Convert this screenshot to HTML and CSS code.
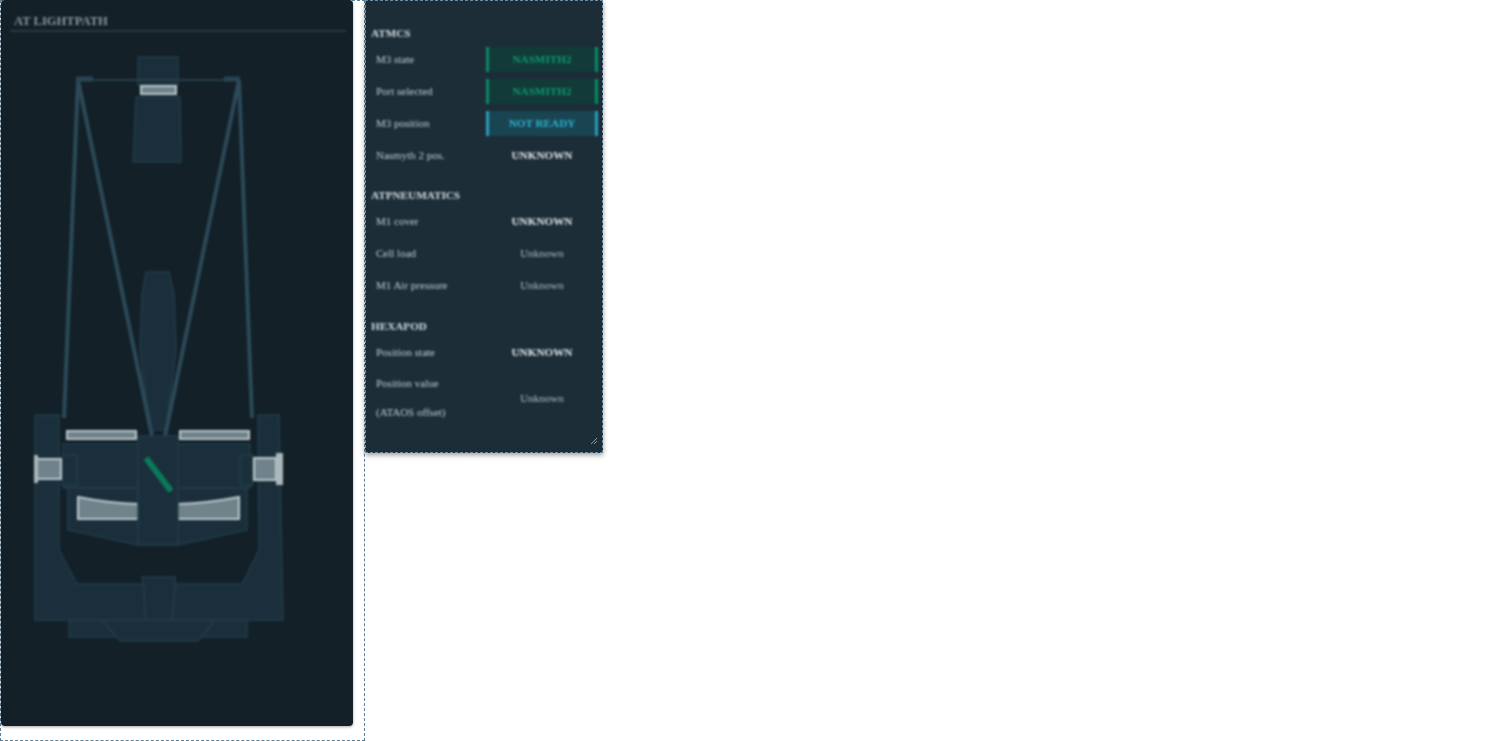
FILE: index.html
```html
<!DOCTYPE html>
<html lang="en">
<head>
    <meta charset="UTF-8">
    <title>AT Summary</title>
    <link rel="stylesheet" href="styles.css">
</head>
<body>
    <div class="cell">
        <section class="lightpath">
            <h2 class="lightpath-title">AT LIGHTPATH</h2>
            <svg class="telescope" width="352" height="726" viewBox="0 0 352 726">
                <!-- structure -->
                <g class="body">
                    <path d="M69 620H247V637H69Z"/>
                    <path d="M102 620L120 641H198L215 620Z"/>
                    <path d="M35 415H59V550L77 584H242L259 550L258 415H279L283 620H35Z"/>
                    <path d="M142 577H175V587L172 620H145L144 587Z"/>
                    <path d="M68 488V530L138 545H178L247 530V488Z"/>
                    <path d="M63 444H250V488H63Z"/>
                    <path d="M62 455H77V485H62Z"/>
                    <path d="M240 455H253V485H240Z"/>
                    <path d="M138 57H178V85H138Z"/>
                    <path d="M136 97H180L181 162H133Z"/>
                    <path d="M146 272H169L174 295L176 350L166 430H150L140 350L142 295Z"/>
                </g>
                <!-- truss -->
                <g class="truss">
                    <path d="M78 80L64 418"/>
                    <path d="M78 80L152 436"/>
                    <path d="M239 80L252 418"/>
                    <path d="M239 80L165 436"/>
                </g>
                <path class="truss-top" d="M78 80H239"/>
                <path class="truss-cap" d="M76 79H93M224 79H240"/>
                <!-- mirrors -->
                <g class="mirror">
                    <path d="M141 86H176V94H141Z"/>
                    <path d="M67 431H136V439H67Z"/>
                    <path d="M180 431H249V439H180Z"/>
                    <path d="M78 497Q108 503 138 504V519H78Z"/>
                    <path d="M178 504Q208 503 239 497V519H178Z"/>
                    <path d="M36 459H61V479H36Z"/>
                    <path d="M254 458H276V480H254Z"/>
                </g>
                <path class="flange" d="M34 455H38V483H34Z"/>
                <path class="flange" d="M276 453H283V485H276Z"/>
                <path class="body column" d="M138 436H178V545H138Z"/>
                <path class="m3" d="M146 458L171 491"/>
            </svg>
        </section>
    </div>

    <section class="summary">
        <div class="summary-body">
            <h3 class="group-title">ATMCS</h3>
            <div class="row"><span>M3 state</span><span class="status ok">NASMITH2</span></div>
            <div class="row"><span>Port selected</span><span class="status ok">NASMITH2</span></div>
            <div class="row"><span>M3 position</span><span class="status running">NOT READY</span></div>
            <div class="row"><span>Nasmyth 2 pos.</span><span class="status">UNKNOWN</span></div>

            <h3 class="group-title">ATPNEUMATICS</h3>
            <div class="row"><span>M1 cover</span><span class="status">UNKNOWN</span></div>
            <div class="row"><span>Cell load</span><span class="value">Unknown</span></div>
            <div class="row"><span>M1 Air pressure</span><span class="value">Unknown</span></div>

            <h3 class="group-title group-title-low">HEXAPOD</h3>
            <div class="row"><span>Position state</span><span class="status">UNKNOWN</span></div>
            <div class="row row-tall"><span>Position value<br>(ATAOS offset)</span><span class="value">Unknown</span></div>
        </div>
        <svg class="resize-handle" width="8" height="8" viewBox="0 0 8 8">
            <path d="M7 1L1 7M7 4L4 7"/>
        </svg>
    </section>
</body>
</html>
```

FILE: styles.css
```css
body {
    margin: 0;
    background: #fff;
    font-family: "Liberation Serif", serif;
    font-size: 11px;
    color: #c4cdd1;
}

.cell {
    box-sizing: border-box;
    width: 365px;
    height: 741px;
    border: 1px dashed #5d8098;
}

.lightpath {
    width: 352px;
    height: 726px;
    margin-top: -1px;
    background: #132028;
    border-radius: 4px;
    box-shadow: 0 1px 3px rgba(0, 0, 0, 0.35);
    position: relative;
}

.lightpath-title {
    position: absolute;
    top: 13px;
    left: 9px;
    width: 332px;
    margin: 0;
    padding: 0 0 0 4px;
    font-size: 12.6px;
    line-height: 17px;
    color: #8a989e;
    border-bottom: 2px solid #2a3a44;
    filter: blur(1.2px);
}

.telescope {
    position: absolute;
    top: 0;
    left: -1px;
    filter: blur(1px);
}

.body path, .body.column {
    fill: #1a2f3b;
    stroke: #233d4b;
    stroke-width: 1.5;
}

.truss path {
    fill: none;
    stroke: #2c4a59;
    stroke-width: 4;
}

.truss-top {
    stroke: #25404e;
    stroke-width: 2;
}

.truss-cap {
    stroke: #2a4655;
    stroke-width: 5;
}

.mirror path {
    fill: #70838b;
    stroke: #bcc8cc;
    stroke-width: 2;
}

.flange {
    fill: #aab7bc;
}

.m3 {
    fill: none;
    stroke: #0a7a5c;
    stroke-width: 6;
}

.summary {
    position: absolute;
    top: 0;
    left: 365px;
    box-sizing: border-box;
    width: 238px;
    height: 453px;
    background: #1c2d38;
    border: 1px dashed #6b8da3;
    box-shadow: 0 2px 5px rgba(0, 0, 0, 0.4);
}

.summary-body {
    padding: 22px 0 0 5px;
    filter: blur(1.25px);
}

.group-title {
    margin: 14px 0 0;
    font-size: 11.2px;
    line-height: 20px;
    color: #d6dde0;
}

.group-title:first-child {
    margin-top: 0;
}

.group-title-low {
    margin-top: 15px;
}

.row {
    display: grid;
    grid-template-columns: 110px 112px;
    align-items: center;
    min-height: 32px;
    padding-left: 5px;
}

.row-tall {
    padding-top: 1px;
    line-height: 29px;
}

.status, .value {
    text-align: center;
}

.status {
    box-sizing: border-box;
    height: 25px;
    line-height: 25px;
    font-weight: bold;
    color: #e4e9eb;
    font-size: 11.2px;
}

.status.ok {
    background: #123a38;
    color: #0d9a70;
    border-left: 3px solid #0c8a66;
    border-right: 3px solid #0c8a66;
}

.status.running {
    background: #194553;
    color: #2eb4d2;
    border-left: 3px solid #2a9db8;
    border-right: 3px solid #2a9db8;
}

.value {
    line-height: 16px;
    color: #b4bfc4;
}

.resize-handle {
    position: absolute;
    right: 4px;
    bottom: 7px;
    filter: blur(0.5px);
}

.resize-handle path {
    fill: none;
    stroke: #8a9aa2;
}
```
